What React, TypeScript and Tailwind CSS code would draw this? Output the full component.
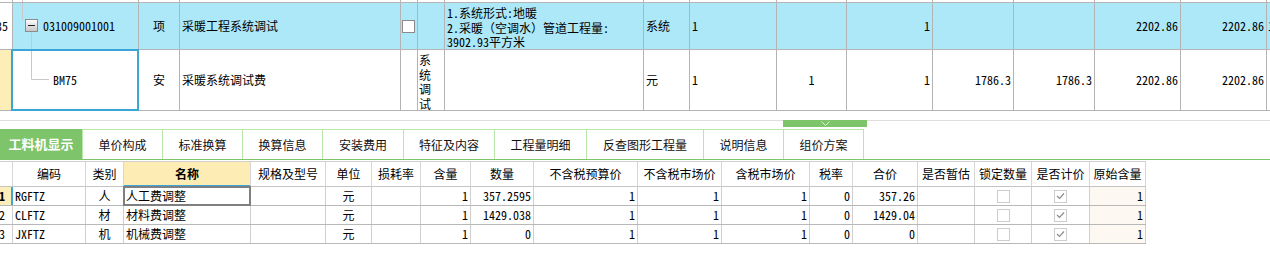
import React from "react";

const GF = "font-['Noto_Sans_Mono_CJK_SC','Noto_Sans_CJK_SC',sans-serif]";

function C({ w, className = "", children }: { w: string; className?: string; children?: React.ReactNode }) {
  return <div className={`${w} shrink-0 h-full border-r border-[#b4b4b4] relative flex ${className}`}>{children}</div>;
}

const TW = [
  "w-[13px]", "w-[126px]", "w-[41px]", "w-[221px]", "w-[17px]", "w-[27px]", "w-[199px]", "w-[46px]",
  "w-[87px]", "w-[70px]", "w-[86px]", "w-[81px]", "w-[81px]", "w-[86px]", "w-[86px]",
];

function TopGrid() {
  return (
    <div className="w-[1270px]">
      {/* partial previous row */}
      <div className="flex h-[3px] border-b border-[#b4b4b4] bg-white">
        {TW.map((w, i) => (
          <C key={i} w={w}>
            {i === 1 && <div className="ml-[9px] w-px h-full bg-[#c8c8c8]" />}
          </C>
        ))}
        <div className="flex-1 h-full" />
      </div>

      {/* row 1 */}
      <div className="flex h-[47px] border-b border-[#b4b4b4] bg-[#ade8f9]">
        <C w={TW[0]} className="bg-white justify-end items-center pr-[4px] overflow-hidden">
          <span className="whitespace-nowrap">35</span>
        </C>
        <C w={TW[1]} className="items-center">
          <svg width="30" height="46" className="shrink-0">
            <defs>
              <linearGradient id="mg" x1="0" y1="0" x2="0" y2="1">
                <stop offset="0" stopColor="#ffffff" />
                <stop offset="1" stopColor="#c4c4c4" />
              </linearGradient>
            </defs>
            <line x1="9.5" y1="0" x2="9.5" y2="16.5" stroke="#c8c8c8" />
            <rect x="12.5" y="16.5" width="12" height="12" fill="url(#mg)" stroke="#8c8c8c" />
            <line x1="15" y1="22.5" x2="22" y2="22.5" stroke="#222222" />
            <line x1="18.5" y1="29" x2="18.5" y2="46" stroke="#c8c8c8" />
          </svg>
          <span className="whitespace-nowrap">031009001001</span>
        </C>
        <C w={TW[2]} className="items-center justify-center">项</C>
        <C w={TW[3]} className="items-center pl-[2px]">采暖工程系统调试</C>
        <C w={TW[4]} className="items-center">
          <div className="ml-[1px] w-[13px] h-[13px] border border-[#8a8a8a] bg-white" />
        </C>
        <C w={TW[5]} />
        <C w={TW[6]} className="flex-col items-start pl-[2px] pt-[3px] leading-[14.5px]">
          <div className="whitespace-nowrap">1.系统形式:地暖</div>
          <div className="whitespace-nowrap">2.采暖（空调水）管道工程量:</div>
          <div className="whitespace-nowrap">3902.93平方米</div>
        </C>
        <C w={TW[7]} className="items-center pl-[2px]">系统</C>
        <C w={TW[8]} className="items-center pl-[2px]">1</C>
        <C w={TW[9]} />
        <C w={TW[10]} className="items-center justify-end pr-[2px]">1</C>
        <C w={TW[11]} />
        <C w={TW[12]} />
        <C w={TW[13]} className="items-center justify-end pr-[2px]">2202.86</C>
        <C w={TW[14]} className="items-center justify-end pr-[2px]">2202.86</C>
        <div className="flex-1 h-full flex items-center pl-[1px] overflow-hidden">1</div>
      </div>

      {/* row 2 */}
      <div className="flex h-[61px] border-b border-[#b4b4b4] bg-white">
        <C w={TW[0]} className="bg-[#fdeeb8]" />
        <C w={TW[1]} className="items-center">
          <svg width="40" height="60" className="shrink-0">
            <line x1="18.5" y1="0" x2="18.5" y2="29.5" stroke="#c8c8c8" />
            <line x1="18.5" y1="29.5" x2="36" y2="29.5" stroke="#c8c8c8" />
          </svg>
          <span className="whitespace-nowrap">BM75</span>
          <div className="absolute -left-[2px] -top-[1px] -right-[1px] -bottom-[1px] border-2 border-[#3aa6d8] pointer-events-none" />
        </C>
        <C w={TW[2]} className="items-center justify-center">安</C>
        <C w={TW[3]} className="items-center pl-[2px]">采暖系统调试费</C>
        <C w={TW[4]} />
        <C w={TW[5]} className="overflow-hidden">
          <div className="pl-[1px] pt-[3px] leading-[14.5px] w-[14px] break-all">系统调试</div>
        </C>
        <C w={TW[6]} />
        <C w={TW[7]} className="items-center pl-[2px]">元</C>
        <C w={TW[8]} className="items-center pl-[2px]">1</C>
        <C w={TW[9]} className="items-center justify-center">1</C>
        <C w={TW[10]} className="items-center justify-end pr-[2px]">1</C>
        <C w={TW[11]} className="items-center justify-end pr-[2px]">1786.3</C>
        <C w={TW[12]} className="items-center justify-end pr-[2px]">1786.3</C>
        <C w={TW[13]} className="items-center justify-end pr-[2px]">2202.86</C>
        <C w={TW[14]} className="items-center justify-end pr-[2px]">2202.86</C>
        <div className="flex-1 h-full" />
      </div>
    </div>
  );
}

function Tabs() {
  const tabs: { t: string; w: string; last?: boolean }[] = [
    { t: "单价构成", w: "w-[80px]" },
    { t: "标准换算", w: "w-[80px]" },
    { t: "换算信息", w: "w-[80px]" },
    { t: "安装费用", w: "w-[81px]" },
    { t: "特征及内容", w: "w-[91px]" },
    { t: "工程量明细", w: "w-[92px]" },
    { t: "反查图形工程量", w: "w-[117px]" },
    { t: "说明信息", w: "w-[80px]" },
    { t: "组价方案", w: "w-[81px]", last: true },
  ];
  return (
    <div className="flex h-[31px] border-b border-[#7ec46a] font-['Noto_Sans_CJK_SC',sans-serif]">
      <div className="w-[82px] shrink-0 h-full bg-[#7ec46a] text-white font-bold text-[13px] flex items-center justify-center">
        工料机显示
      </div>
      {tabs.map((t) => (
        <div
          key={t.t}
          className={`${t.w} shrink-0 h-full border-t border-l border-[#b9e6a9] ${t.last ? "border-r" : ""} flex items-center justify-center text-[12px] text-[#111111]`}
        >
          {t.t}
        </div>
      ))}
    </div>
  );
}

const BW = [
  "w-[13px]", "w-[73px]", "w-[38px]", "w-[127px]", "w-[75px]", "w-[46px]", "w-[49px]", "w-[50px]", "w-[63px]",
  "w-[104px]", "w-[84px]", "w-[88px]", "w-[43px]", "w-[65px]", "w-[57px]", "w-[57px]", "w-[58px]", "w-[56px]",
];
const BH = [
  "", "编码", "类别", "名称", "规格及型号", "单位", "损耗率", "含量", "数量", "不含税预算价", "不含税市场价",
  "含税市场价", "税率", "合价", "是否暂估", "锁定数量", "是否计价", "原始含量",
];

const rows = [
  { n: "1", code: "RGFTZ", cat: "人", name: "人工费调整", qty: "357.2595", total: "357.26", sel: true },
  { n: "2", code: "CLFTZ", cat: "材", name: "材料费调整", qty: "1429.038", total: "1429.04", sel: false },
  { n: "3", code: "JXFTZ", cat: "机", name: "机械费调整", qty: "0", total: "0", sel: false },
];

function Box({ checked }: { checked?: boolean }) {
  return (
    <div className="w-[13px] h-[13px] border border-[#cdcdcd] bg-white flex items-center justify-center">
      {checked && (
        <svg width="9" height="8" viewBox="0 0 9 8">
          <polyline points="1,4 3.5,6.5 8,1.5" fill="none" stroke="#8c8c8c" strokeWidth="1.2" />
        </svg>
      )}
    </div>
  );
}

function D({ i, className = "", children }: { i: number; className?: string; children?: React.ReactNode }) {
  return <div className={`${BW[i]} shrink-0 h-full border-r border-r-[#cfcfcf] relative flex items-center ${className}`}>{children}</div>;
}

function BottomGrid() {
  return (
    <div className="w-[1146px]">
      <div className="flex h-[26px] border-t border-[#d0d0d0]">
        {BH.map((h, i) => (
          <div
            key={i}
            className={`${BW[i]} shrink-0 h-full border-r border-r-[#d6d6d6] border-b ${
              i === 3
                ? "border-b-[#3aa7d8] bg-[#fdedb5] font-bold shadow-[inset_0_-1px_0_#3aa7d8]"
                : "border-b-[#c4c4c4] bg-white"
            } flex items-center justify-center whitespace-nowrap`}
          >
            {h}
          </div>
        ))}
      </div>
      {rows.map((r) => (
        <div key={r.n} className="flex h-[19px] border-b border-[#b8b8b8]">
          <div
            className={`${BW[0]} shrink-0 h-full border-r flex items-center justify-end pr-[7px] overflow-hidden ${
              r.sel ? "border-r-[#3aa7d8] bg-[#fdeeb8] font-bold shadow-[inset_-1px_0_0_#3aa7d8]" : "border-r-[#cfcfcf] bg-white"
            }`}
          >
            <span className="whitespace-nowrap">{r.n}</span>
          </div>
          <D i={1} className="pl-[2px]">{r.code}</D>
          <D i={2} className="justify-center">{r.cat}</D>
          <D i={3} className="pl-[2px]">
            {r.name}
            {r.sel && <div className="absolute -left-px -top-px -right-px -bottom-px border-2 border-[#7f7f7f] pointer-events-none" />}
          </D>
          <D i={4} />
          <D i={5} className="justify-center">元</D>
          <D i={6} />
          <D i={7} className="justify-end pr-[2px]">1</D>
          <D i={8} className="justify-end pr-[2px]">{r.qty}</D>
          <D i={9} className="justify-end pr-[2px]">1</D>
          <D i={10} className="justify-end pr-[2px]">1</D>
          <D i={11} className="justify-end pr-[2px]">1</D>
          <D i={12} className="justify-end pr-[2px]">0</D>
          <D i={13} className="justify-end pr-[2px]">{r.total}</D>
          <D i={14} />
          <D i={15} className="justify-center">
            <Box />
          </D>
          <D i={16} className="justify-center">
            <Box checked />
          </D>
          <D i={17} className="justify-end pr-[2px] bg-[#fdf9f2]">1</D>
        </div>
      ))}
    </div>
  );
}

export default function App() {
  return (
    <div className={`w-[1270px] h-[263px] bg-white overflow-hidden text-[12px] leading-[14px] text-black ${GF}`}>
      <TopGrid />
      <div className="h-[9px]" />
      <div className="h-[9px] border-t border-[#dedede] flex">
        <div className="ml-[783px] -mt-px w-[84px] h-[7px] bg-[#7ec46a] flex items-center justify-center">
          <svg width="9" height="5" viewBox="0 0 9 5">
            <polyline points="0.5,0.5 4.5,4.5 8.5,0.5" fill="none" stroke="#dcf2d2" strokeWidth="1" />
          </svg>
        </div>
      </div>
      <Tabs />
      <div className="h-px" />
      <BottomGrid />
    </div>
  );
}
